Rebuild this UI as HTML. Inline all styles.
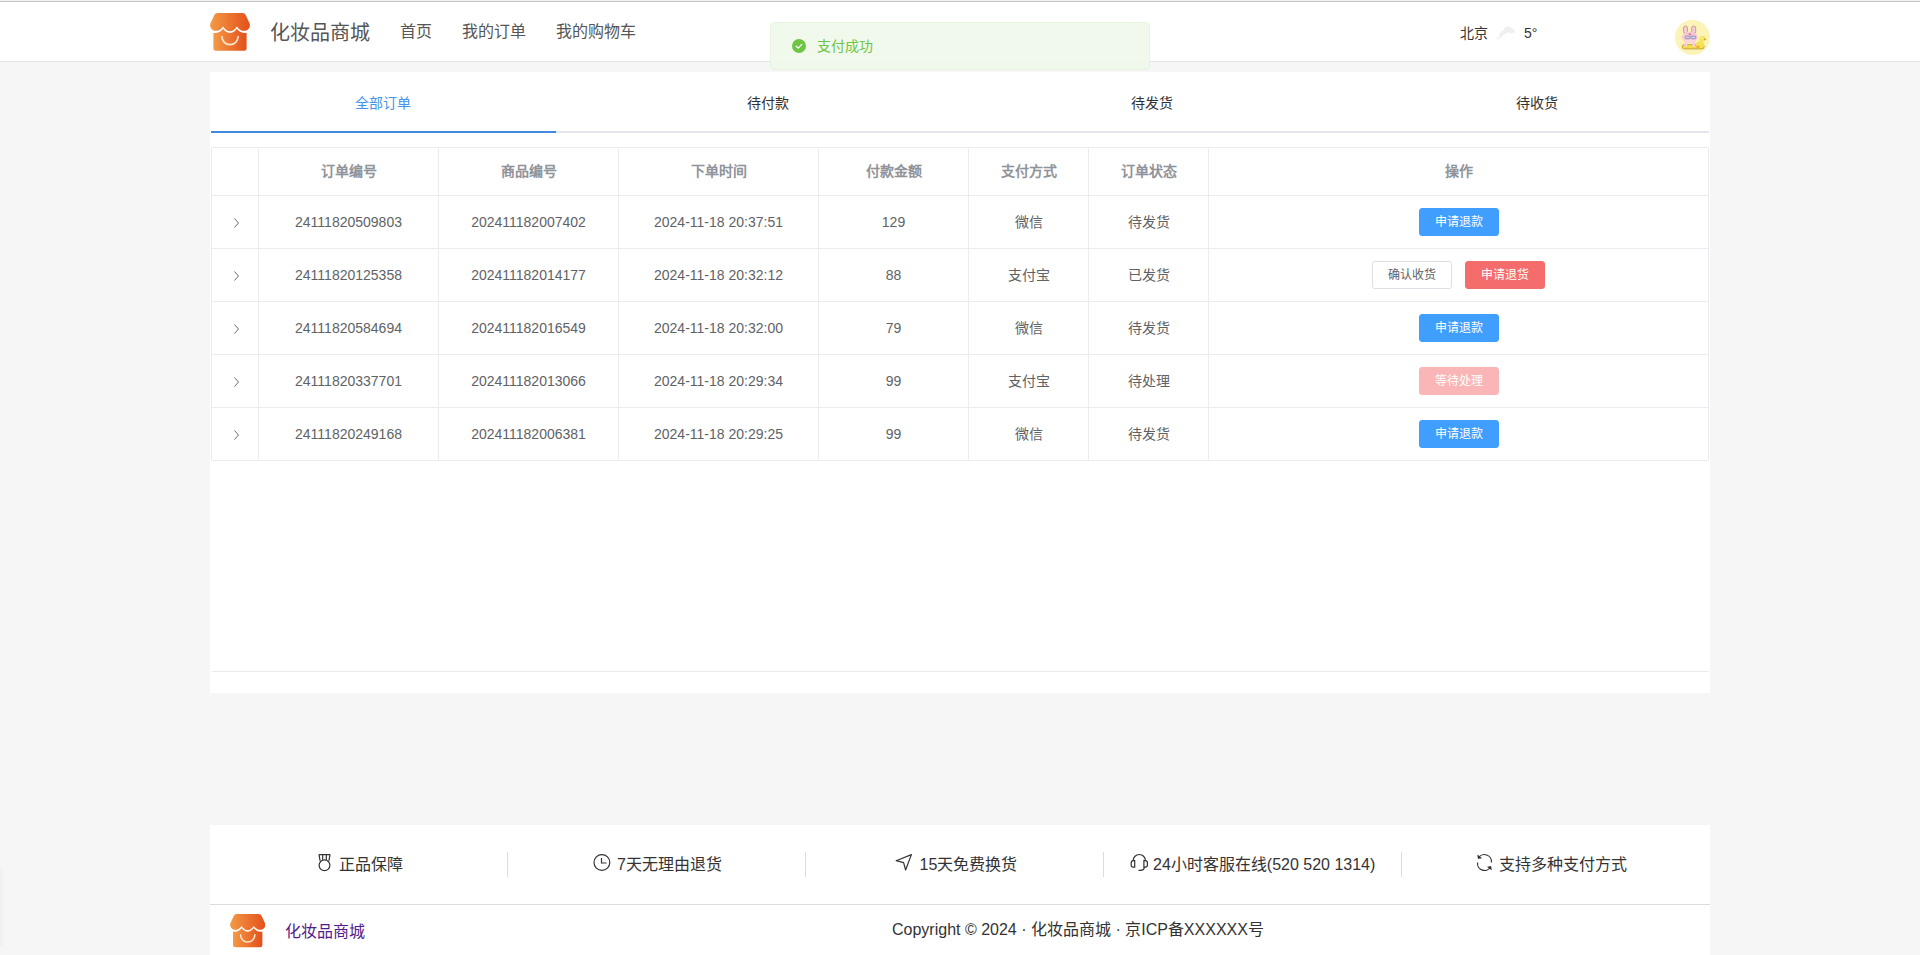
<!DOCTYPE html>
<html lang="zh-CN">
<head>
<meta charset="utf-8">
<title>化妆品商城</title>
<style>
*{box-sizing:border-box;margin:0;padding:0}
html,body{width:1920px;height:955px;overflow:hidden}
body{background:#f6f6f6;font-family:"Liberation Sans",sans-serif;color:#333;position:relative}
.abs{position:absolute}
.topline0{position:absolute;left:0;top:0;width:1920px;height:1px;background:#f1f1f1}
.topline{position:absolute;left:0;top:1px;width:1920px;height:1px;background:#c6c6c6}
.header{position:absolute;left:0;top:0;width:1920px;height:62px;background:#fff;border-bottom:1px solid #e6e6e6}
.logo{position:absolute;left:210px;top:13px}
.brand{position:absolute;left:270px;top:19px;font-size:20px;line-height:28px;color:#555}
.nav{position:absolute;top:21px;font-size:16px;line-height:22px;color:#555}
.toast{position:absolute;left:770px;top:22px;width:380px;height:48px;background:#f0f9eb;border:1px solid #e6f4de;border-radius:4px;z-index:5;opacity:.95}
.toast svg{position:absolute;left:21px;top:16px}
.toast span{position:absolute;left:46px;top:15px;font-size:14px;line-height:16px;color:#67c23a}
.city{position:absolute;left:1460px;top:23px;font-size:14px;line-height:20px;color:#333}
.temp{position:absolute;left:1524px;top:23px;font-size:14px;line-height:20px;color:#333}
.cloud{position:absolute;left:1494px;top:22px}
.avatar{position:absolute;left:1675px;top:20px;width:35px;height:35px}
.card{position:absolute;left:210px;top:72px;width:1500px;height:621px;background:#fff}
.tabs{position:absolute;left:1px;top:0;width:1498px;height:61px}
.tabs .track{position:absolute;left:0;top:59px;width:1498px;height:2px;background:#e3e6eb}
.tabs .bar{position:absolute;left:0;top:59px;width:345px;height:2px;background:#4389dd}
.tab{position:absolute;top:21px;width:344.500px;text-align:center;font-size:14px;line-height:20px;color:#303133}
.tab.on{color:#4693ea}
table{position:absolute;left:1px;top:75px;border-collapse:separate;border-spacing:0;table-layout:fixed;width:1498px;font-size:14px;color:#606266;border-left:1px solid #e9ecf1;border-top:1px solid #e9ecf1}
th,td{border-right:1px solid #e9ecf1;border-bottom:1px solid #e9ecf1;text-align:center;vertical-align:middle;padding:0;white-space:nowrap;line-height:20px}
th{height:48px;color:#909399;font-weight:bold}
th span{position:relative;top:-1px}
td{height:53px}
td span.t{position:relative;top:0}
td.ex svg{display:block;margin:0 auto;position:relative;left:2px;top:.5px}
.btn{font-weight:500;display:inline-block;width:80px;height:28px;line-height:26px;font-size:12px;border-radius:3px;border:1px solid #409eff;background:#409eff;color:#fff;vertical-align:middle;position:relative;top:0}
.btn.plain{background:#fff;border-color:#dcdfe6;color:#606266}
.btn.danger{background:#f56c6c;border-color:#f56c6c}
.btn.dis{background:#fab6b6;border-color:#fab6b6}
.btn+.btn{margin-left:13px}
.cardline{position:absolute;left:2px;top:599px;width:1497px;height:1px;background:#ebebeb}
.footer{position:absolute;left:210px;top:825px;width:1500px;height:130px;background:#fff}
.svc{position:absolute;top:30px;font-size:16px;line-height:20px;color:#333;white-space:nowrap}
.ico{position:absolute}
.div{position:absolute;top:27px;width:1px;height:25px;background:#dcdcdc}
.fline{position:absolute;left:0;top:79px;width:1500px;height:1px;background:#dcdcdc}
.flogo{position:absolute;left:20px;top:89px}
.fbrand{position:absolute;left:75px;top:96px;font-size:16px;line-height:22px;color:#551a8b}
.copy{position:absolute;left:682px;top:94px;font-size:16px;line-height:22px;color:#333;white-space:nowrap}
</style>
</head>
<body>
<svg width="0" height="0" style="position:absolute">
  <defs>
    <linearGradient id="g1" x1="0" y1="0" x2="1" y2="0"><stop offset="0" stop-color="#f39a46"/><stop offset="1" stop-color="#e4501b"/></linearGradient>
    <g id="shop">
      <path d="M7.500 0H32.500Q34.800 0 35.800 2.200L39.600 10.500Q40.800 14.600 37.400 16.900Q34 18.800 30.600 16.900Q28.200 15.600 26.850 13.500Q25.500 15.900 23 17.400Q20 18.900 17 17.400Q14.500 15.900 13.100 13.500Q11.800 15.600 9.400 16.900Q6 18.800 2.600 16.900Q-0.800 14.600 0.400 10.500L4.200 2.200Q5.200 0 7.500 0Z" fill="url(#g1)"/>
      <path d="M3.400 19.800Q7.500 20.600 10.300 18.600Q12 17.400 13.100 15.700Q14.600 18 17 19.300Q20 20.800 23 19.300Q25.400 18 26.850 15.700Q28 17.400 29.700 18.600Q32.500 20.600 36.600 19.800V35.200Q36.600 37.700 34.100 37.700H5.900Q3.400 37.700 3.400 35.200Z" fill="url(#g1)"/>
      <path d="M11.900 23.600A8.100 8.100 0 0 0 28.100 23.600" fill="none" stroke="#fde6cf" stroke-width="1.700" stroke-linecap="round"/>
    </g>
  </defs>
</svg>
<div class="header">
  <svg class="logo" width="40" height="38" viewBox="0 0 40 38"><use href="#shop"/></svg>
  <div class="brand">化妆品商城</div>
  <div class="nav" style="left:400px">首页</div>
  <div class="nav" style="left:462px">我的订单</div>
  <div class="nav" style="left:556px">我的购物车</div>
  <div class="city">北京</div>
  <svg class="cloud" width="24" height="20" viewBox="0 0 24 20"><path d="M3.500 17.500c-1.500 0-1.500-1.800 0-2 .5-.2 1.500-.3 2-.6C5 11 7 9 9.500 8.500 10.500 4.500 15 3 17.500 6.500c2.500 0 4 2.500 3 5-1-.8-2.500-.8-3.500 0-1.500-1.500-4-1.200-5 .5-2 0-3.500 1.200-4 3-1.500.2-2.500 1.500-4.500 2.500z" fill="#efefef"/></svg>
  <div class="temp">5°</div>
  <svg class="avatar" width="35" height="35" viewBox="0 0 35 35">
    <circle cx="17.500" cy="17.500" r="17.500" fill="#fcf3b8"/>
    <rect x="7.200" y="24.600" width="22" height="4.300" rx="2.100" fill="#f2d84a" stroke="#b99a35" stroke-width=".8"/>
    <ellipse cx="25" cy="24.700" rx="4" ry="3.400" fill="#f6e255"/>
    <circle cx="27.200" cy="18.700" r="3" fill="#f6e255"/>
    <circle cx="26.600" cy="17.900" r="1.300" fill="#faf08e"/>
    <path d="M29.400 17.900l2.100 1.300-2.300 1.300z" fill="#bf9a2e"/>
    <ellipse cx="22.900" cy="26.800" rx="1.900" ry="1.100" fill="#f2a93a"/>
    <path d="M13.400 27.800l1.400-3.200 1.500 3.200z" fill="#f7e23c"/>
    <rect x="8.500" y="6" width="4" height="7.500" rx="2" fill="#f9cbd4" stroke="#b48a80" stroke-width=".7"/>
    <rect x="16.700" y="6" width="4" height="7.500" rx="2" fill="#f9cbd4" stroke="#b48a80" stroke-width=".7"/>
    <ellipse cx="14.900" cy="17.300" rx="7.800" ry="5.700" fill="#f8c6d0"/>
    <ellipse cx="14.900" cy="20.800" rx="5" ry="1.900" fill="#fbd6dd"/>
    <rect x="9.400" y="22" width="3" height="5" rx="1.400" fill="#f9cdd5"/>
    <rect x="17.200" y="22" width="3" height="5" rx="1.400" fill="#f9cdd5"/>
    <rect x="10.400" y="16.100" width="4.700" height="2.700" rx="1" fill="#cfd0ee" stroke="#8582b6" stroke-width=".8"/>
    <rect x="15.900" y="16.100" width="4.700" height="2.700" rx="1" fill="#cfd0ee" stroke="#8582b6" stroke-width=".8"/>
    <rect x="13.800" y="13.700" width="2.400" height=".9" fill="#8f5f68"/>
  </svg>
</div>
<div class="abs" style="left:0;top:868px;width:3px;height:78px;background:#f1f1f1"></div>
<div class="topline0"></div><div class="topline"></div>
<div class="toast">
  <svg width="14" height="14" viewBox="0 0 14 14"><circle cx="7" cy="7" r="7" fill="#67c23a"/><path d="M4.200 7.200l2 1.900 3.600-3.700" fill="none" stroke="#fff" stroke-width="1.250" stroke-linecap="round" stroke-linejoin="round"/></svg>
  <span>支付成功</span>
</div>

<div class="card">
  <div class="tabs">
    <div class="track"></div><div class="bar"></div>
    <div class="tab on" style="left:0">全部订单</div>
    <div class="tab" style="left:384.500px">待付款</div>
    <div class="tab" style="left:769px">待发货</div>
    <div class="tab" style="left:1153.500px">待收货</div>
  </div>
  <table>
    <colgroup><col style="width:47px"><col style="width:180px"><col style="width:180px"><col style="width:200px"><col style="width:150px"><col style="width:120px"><col style="width:120px"><col style="width:500px"></colgroup>
    <tr><th></th><th><span>订单编号</span></th><th><span>商品编号</span></th><th><span>下单时间</span></th><th><span>付款金额</span></th><th><span>支付方式</span></th><th><span>订单状态</span></th><th><span>操作</span></th></tr>
    <tr><td class="ex"><svg width="10" height="10" viewBox="0 0 10 10"><path d="M2.500 .5l4 4.500-4 4.500" fill="none" stroke="#6a6a6a" stroke-width="1"/></svg></td><td><span class="t">24111820509803</span></td><td><span class="t">202411182007402</span></td><td><span class="t">2024-11-18 20:37:51</span></td><td><span class="t">129</span></td><td><span class="t">微信</span></td><td><span class="t">待发货</span></td><td><span class="btn">申请退款</span></td></tr>
    <tr><td class="ex"><svg width="10" height="10" viewBox="0 0 10 10"><path d="M2.500 .5l4 4.500-4 4.500" fill="none" stroke="#6a6a6a" stroke-width="1"/></svg></td><td><span class="t">24111820125358</span></td><td><span class="t">202411182014177</span></td><td><span class="t">2024-11-18 20:32:12</span></td><td><span class="t">88</span></td><td><span class="t">支付宝</span></td><td><span class="t">已发货</span></td><td><span class="btn plain">确认收货</span><span class="btn danger">申请退货</span></td></tr>
    <tr><td class="ex"><svg width="10" height="10" viewBox="0 0 10 10"><path d="M2.500 .5l4 4.500-4 4.500" fill="none" stroke="#6a6a6a" stroke-width="1"/></svg></td><td><span class="t">24111820584694</span></td><td><span class="t">202411182016549</span></td><td><span class="t">2024-11-18 20:32:00</span></td><td><span class="t">79</span></td><td><span class="t">微信</span></td><td><span class="t">待发货</span></td><td><span class="btn">申请退款</span></td></tr>
    <tr><td class="ex"><svg width="10" height="10" viewBox="0 0 10 10"><path d="M2.500 .5l4 4.500-4 4.500" fill="none" stroke="#6a6a6a" stroke-width="1"/></svg></td><td><span class="t">24111820337701</span></td><td><span class="t">202411182013066</span></td><td><span class="t">2024-11-18 20:29:34</span></td><td><span class="t">99</span></td><td><span class="t">支付宝</span></td><td><span class="t">待处理</span></td><td><span class="btn danger dis">等待处理</span></td></tr>
    <tr><td class="ex"><svg width="10" height="10" viewBox="0 0 10 10"><path d="M2.500 .5l4 4.500-4 4.500" fill="none" stroke="#6a6a6a" stroke-width="1"/></svg></td><td><span class="t">24111820249168</span></td><td><span class="t">202411182006381</span></td><td><span class="t">2024-11-18 20:29:25</span></td><td><span class="t">99</span></td><td><span class="t">微信</span></td><td><span class="t">待发货</span></td><td><span class="btn">申请退款</span></td></tr>
  </table>
  <div class="cardline"></div>
</div>

<div class="footer">
  <!-- medal -->
  <svg class="ico" style="left:107px;top:28px" width="16" height="19" viewBox="0 0 16 19"><g fill="none" stroke="#333" stroke-width="1.200"><circle cx="7.500" cy="12.300" r="5.400"/><path d="M1.700 1.600h11.600M2 1.600l1.100 6.200M13 1.600l-1.100 6.200M5.700 1.600v5.500M9.300 1.600v5.500"/></g></svg>
  <div class="svc" style="left:128.500px">正品保障</div>
  <!-- clock -->
  <svg class="ico" style="left:382px;top:28px" width="20" height="20" viewBox="0 0 20 20"><g fill="none" stroke="#333" stroke-width="1.200"><circle cx="9.900" cy="9.500" r="7.900"/><path d="M9.500 5v5h5"/></g></svg>
  <div class="svc" style="left:407px">7天无理由退货</div>
  <!-- position -->
  <svg class="ico" style="left:684px;top:27px" width="20" height="20" viewBox="0 0 20 20"><path d="M17.400 2.600L2.200 8.700l7.400 2 2 7.300z" fill="none" stroke="#333" stroke-width="1.200" stroke-linejoin="round"/></svg>
  <div class="svc" style="left:709.500px">15天免费换货</div>
  <!-- headset -->
  <svg class="ico" style="left:919px;top:27px" width="20" height="20" viewBox="0 0 20 20"><g fill="none" stroke="#333" stroke-width="1.200"><path d="M4.200 9V8.600a6.100 6.100 0 0 1 12.200 0V9"/><path d="M5.700 8.700h-1.400a2.100 2.100 0 0 0-2.100 2.100v2.200a2.100 2.100 0 0 0 2.100 2.100h1.400z"/><path d="M14.900 8.700h1.400a2.100 2.100 0 0 1 2.100 2.100v2.200a2.100 2.100 0 0 1-2.100 2.100h-1.400z"/><path d="M15.300 15.100c0 2.200-1.800 3.300-4 3.300h-1.800"/></g></svg>
  <div class="svc" style="left:943px">24小时客服在线(520 520 1314)</div>
  <!-- refresh -->
  <svg class="ico" style="left:1265px;top:27px" width="20" height="20" viewBox="0 0 20 20"><g fill="none" stroke="#333" stroke-width="1.200"><path d="M3.400 6.100A7 7 0 0 1 16.400 10.500"/><path d="M15.700 14.800A7 7 0 0 1 2.600 10.500"/></g><path d="M2.700 3.200l.5 3.300 3.300-.5zM16.400 17.700l-.5-3.300-3.300.5z" fill="#333" stroke="#333" stroke-width=".6" stroke-linejoin="round"/></svg>
  <div class="svc" style="left:1288.500px">支持多种支付方式</div>
  <div class="div" style="left:297px"></div><div class="div" style="left:595px"></div><div class="div" style="left:893px"></div><div class="div" style="left:1191px"></div>
  <div class="fline"></div>
  <svg class="flogo" width="35.400" height="33.600" viewBox="0 0 40 38"><use href="#shop"/></svg>
  <div class="fbrand">化妆品商城</div>
  <div class="copy">Copyright © 2024 · 化妆品商城 · 京ICP备XXXXXX号</div>
</div>
</body>
</html>
